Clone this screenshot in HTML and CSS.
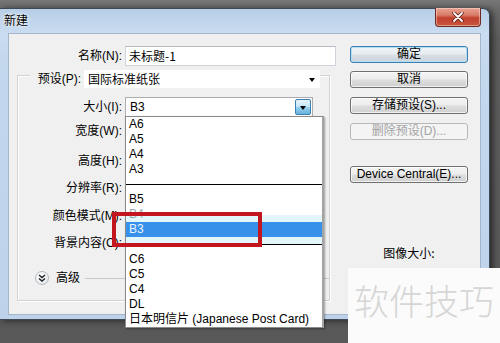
FILE: index.html
```html
<!DOCTYPE html>
<html>
<head>
<meta charset="utf-8">
<link rel="stylesheet" href="styles.css">
</head>
<body>
<div class="desktop">
  <div class="window">
    <div class="titlebar">
      <span class="title">新建</span>
      <div class="close">
        <svg width="14" height="10" viewBox="0 0 14 10"><path d="M3 1 L11 9 M11 1 L3 9" stroke="#5a1a14" stroke-width="3.4" stroke-linecap="round"/><path d="M3 1 L11 9 M11 1 L3 9" stroke="#fff" stroke-width="1.8" stroke-linecap="round"/></svg>
      </div>
    </div>
    <div class="client">
      <div class="left">
        <div class="name-row">
          <span class="lbl">名称(N):</span>
          <div class="input">未标题-1</div>
        </div>
        <div class="group">
          <div class="preset-row">
            <span class="plbl">预设(P):</span>
            <div class="preset">国际标准纸张<span class="tri"></span></div>
          </div>
          <div class="size-row">
            <span class="lbl2">大小(I):</span>
            <div class="select">B3<span class="dbtn"><span class="tri"></span></span></div>
          </div>
          <div class="lr r-w">宽度(W):</div>
          <div class="lr r-h">高度(H):</div>
          <div class="lr r-r">分辨率(R):</div>
          <div class="lr r-m">颜色模式(M):</div>
          <div class="lr r-c">背景内容(C):</div>
          <div class="adv-row">
            <span class="adv-icon"><svg width="8" height="8" viewBox="0 0 8 8"><path d="M1 1 L4 3.5 L7 1 M1 4.5 L4 7 L7 4.5" fill="none" stroke="#222" stroke-width="1.4"/></svg></span>
            <span class="adv-text">高级</span>
            <span class="adv-line"></span>
          </div>
        </div>
      </div>
      <div class="right">
        <div class="btn default">确定</div>
        <div class="btn b2">取消</div>
        <div class="btn b3">存储预设(S)...</div>
        <div class="btn b4 disabled">删除预设(D)...</div>
        <div class="btn b5">Device Central(E)...</div>
        <div class="imgsize">图像大小:</div>
      </div>
    </div>
  </div>
  <div class="dropdown">
    <div class="it">A6</div>
    <div class="it">A5</div>
    <div class="it">A4</div>
    <div class="it">A3</div>
    <div class="it sep"></div>
    <div class="it">B5</div>
    <div class="it faded">B4</div>
    <div class="it sel">B3</div>
    <div class="it sep sep2"></div>
    <div class="it">C6</div>
    <div class="it">C5</div>
    <div class="it">C4</div>
    <div class="it">DL</div>
    <div class="it">日本明信片 (Japanese Post Card)</div>
  </div>
  <div class="redbox"></div>
  <div class="watermark">软件技巧</div>
</div>
</body>
</html>
```
FILE: styles.css
```css
* { box-sizing: border-box; margin: 0; padding: 0; }
body {
  width: 500px; height: 343px; overflow: hidden;
  background: #5a5a5a;
  font-family: "Liberation Sans", "Noto Sans CJK SC", sans-serif;
  font-size: 12px; color: #000;
}
.desktop {
  position: relative; width: 500px; height: 343px;
  background: linear-gradient(#777 0, #6c6c6c 8px, #5e5e5e 40px, #585858 100%);
}
.window {
  position: absolute; left: 0; top: 8px; width: 490px; height: 312px;
  background: linear-gradient(#b8cfe8 0, #c9dcf0 24px, #c3d7ed 60px, #bed3ea 100%);
  border: 1px solid #3e4a56; border-left: none;
  border-radius: 0 7px 0 0;
  box-shadow: 3px 1px 6px rgba(0,0,0,.55);
  display: flex; flex-direction: column;
}
.titlebar {
  position: relative; height: 24px; flex: none;
  display: flex; align-items: center; padding: 0 0 3px 4px;
}
.title {
  font-family: "Noto Sans CJK SC", sans-serif; font-size: 12px; line-height: 14px;
  text-shadow: 0 0 4px #fff, 0 0 2px #fff;
}
.close {
  position: absolute; top: -1px; right: 8px; width: 46px; height: 19px;
  border: 1px solid #6a2a22; border-top: none; border-radius: 0 0 4px 4px;
  background: linear-gradient(#e8a493 0, #d77a66 40%, #c2412e 55%, #c9563f 100%);
  display: flex; align-items: center; justify-content: center;
  box-shadow: inset 0 0 0 1px rgba(255,220,210,.5);
}
.client {
  flex: 1; margin: 0 8px 4px 8px;
  background: #f0f0f0; border: 1px solid #a4b6c9;
  display: flex;
}
.left { width: 331px; flex: none; }
.name-row { display: flex; margin-top: 12px; height: 20px; }
.lbl { width: 113px; text-align: right; line-height: 20px; margin-right: 3px; }
.input {
  width: 211px; height: 20px; background: #fff;
  border: 1px solid #d0d4da; border-top-color: #b8bcc2;
  padding-left: 3px; line-height: 18px;
  font-family: "Noto Sans CJK SC", sans-serif;
}
.group {
  margin: 9px 0 0 8px; width: 313px; height: 226px;
  border: 1px solid #d2d2d2;
  box-shadow: inset 1px 1px 0 #fff, 1px 1px 0 #fff;
  display: flex; flex-direction: column;
}
.preset-row { display: flex; margin-top: -6px; height: 18px; padding-left: 12px; }
.plbl {
  width: 54px; background: #f0f0f0; text-align: right; padding-right: 3px;
  line-height: 18px;
}
.preset {
  position: relative; width: 236px; height: 18px; background: #fff;
  padding-left: 4px; line-height: 18px;
  font-family: "Noto Sans CJK SC", sans-serif;
}
.tri {
  position: absolute; width: 0; height: 0;
  border-left: 3.5px solid transparent; border-right: 3.5px solid transparent;
  border-top: 4px solid #000;
}
.preset .tri { right: 5px; top: 8px; }
.size-row { display: flex; margin-top: 9px; height: 20px; }
.lbl2 { width: 104px; text-align: right; line-height: 20px; margin-right: 3px; }
.select {
  position: relative; width: 188px; height: 20px; background: #fff;
  border: 1px solid #abadb3; padding-left: 4px; line-height: 18px;
}
.dbtn {
  position: absolute; right: 1px; top: 1px; width: 16px; height: 16px;
  border: 1px solid #3c7fb1; border-radius: 2px;
  background: linear-gradient(#e5f4fc 0, #c4e5f6 50%, #98d1ef 51%, #68b3db 100%);
}
.dbtn .tri { left: 4px; top: 6px; }
.lr { width: 104px; text-align: right; white-space: nowrap; }
.r-w { height: 28px; line-height: 28px; }
.r-h { height: 32px; line-height: 32px; }
.r-r { height: 22px; line-height: 22px; }
.r-m { height: 34px; line-height: 34px; }
.r-c { height: 20px; line-height: 20px; }
.adv-row {
  display: flex; align-items: center; margin-top: 18px; height: 14px;
  padding-left: 17px;
}
.adv-icon {
  width: 14px; height: 14px; border-radius: 50%;
  border: 1px solid #b4b9bf;
  background: radial-gradient(circle at 40% 35%, #fff 0, #eceff2 60%, #d3d8dd 100%);
  display: flex; align-items: center; justify-content: center;
}
.adv-text { margin-left: 7px; line-height: 14px; }
.adv-line { flex: 1; height: 1px; background: #c9c9c9; margin-left: 5px; }
.right { display: flex; flex-direction: column; padding: 12px 0 0 10px; }
.btn {
  width: 118px; height: 17px; flex: none;
  border: 1px solid #707070; border-radius: 3px;
  background: linear-gradient(#f4f4f4 0, #ececec 48%, #dedede 52%, #d0d0d0 100%);
  box-shadow: inset 0 0 0 1px rgba(255,255,255,.7);
  text-align: center; line-height: 15px; white-space: nowrap;
}
.btn.default {
  border-color: #3c7fb1;
  background: linear-gradient(#f0f4f7 0, #e6ecf0 48%, #d8dfe5 52%, #ccd5dc 100%);
  box-shadow: inset 0 0 0 1px #b6def4;
}
.b2 { margin-top: 8px; }
.b3 { margin-top: 9px; }
.b4 { margin-top: 9px; }
.b5 { margin-top: 26px; }
.btn.disabled {
  border-color: #b5b9bc; color: #a3a3a3;
  background: #f4f4f4; box-shadow: none;
}
.imgsize {
  margin-top: 63px; width: 118px; text-align: center; line-height: 14px;
  font-family: "Noto Sans CJK SC", sans-serif;
}
.dropdown {
  position: absolute; left: 125px; top: 116px; width: 199px; height: 212px;
  background: #fff; border: 1px solid #8a8a8a; border-right: 2px solid #a3a3a3;
  box-shadow: 1px 1px 2px rgba(0,0,0,.35);
}
.it { height: 15px; line-height: 15px; padding-left: 3px; white-space: nowrap; }
.sep { background: linear-gradient(transparent 7px, #000 7px, #000 8px, transparent 8px); }
.sep2 { background: linear-gradient(#e3f6fa 0, #e3f6fa 7px, #000 7px, #000 8px, transparent 8px); }
.faded { background: linear-gradient(#fff 0, #fff 8px, #e3f6fa 8px); color: #9aa8b0; }
.sel { background: #3790ea; color: #eaf4ff; }
.redbox {
  position: absolute; left: 112px; top: 212px; width: 150px; height: 35px;
  border: 4px solid #c4161e;
}
.watermark {
  position: absolute; left: 348px; top: 268px; width: 152px; height: 75px;
  background: #fbfbfb; padding: 12px 0 0 6px;
  font-family: "Noto Sans CJK SC", sans-serif; font-size: 35px; font-weight: 300;
  line-height: 40px; color: #d6d6d6; white-space: nowrap;
}
```
